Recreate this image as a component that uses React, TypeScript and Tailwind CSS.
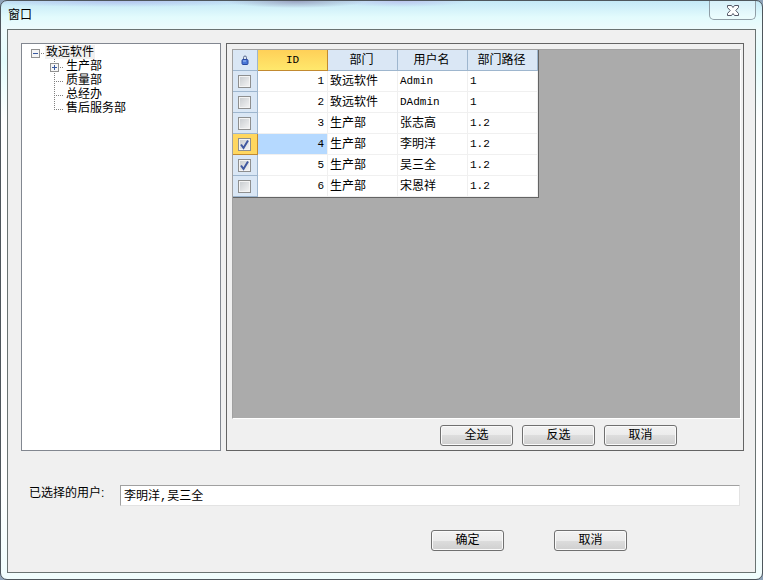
import React from "react";

interface User {
  id: number;
  dept: string;
  name: string;
  path: string;
  checked?: boolean;
  current?: boolean;
}

const users: User[] = [
  { id: 1, dept: "致远软件", name: "Admin", path: "1" },
  { id: 2, dept: "致远软件", name: "DAdmin", path: "1" },
  { id: 3, dept: "生产部", name: "张志高", path: "1.2" },
  { id: 4, dept: "生产部", name: "李明洋", path: "1.2", checked: true, current: true },
  { id: 5, dept: "生产部", name: "吴三全", path: "1.2", checked: true },
  { id: 6, dept: "生产部", name: "宋恩祥", path: "1.2" },
];

const departments = [
  { name: "生产部", expandable: true },
  { name: "质量部" },
  { name: "总经办" },
  { name: "售后服务部" },
];

const isLatin = (text: string) => /^[\w.]+$/.test(text);

const Button: React.FC<{ children: React.ReactNode }> = ({ children }) => (
  <button
    type="button"
    className="flex h-[21px] w-[73px] items-center justify-center rounded-[3px] border border-[#707070] bg-[linear-gradient(#f2f2f2,#ebebeb_50%,#dddddd_50%,#cfcfcf)] pb-0.5 leading-4 shadow-[inset_0_0_0_1px_#fafafa]"
  >
    {children}
  </button>
);

const ExpanderBox: React.FC<{ open: boolean }> = ({ open }) => (
  <>
    <rect x="0.5" y="4.5" width="8" height="8" rx="1" fill="#f6f6f6" stroke="#919191" />
    <path d={open ? "M2 8.5h5" : "M2 8.5h5M4.5 6v5"} stroke="#3a5aa0" />
  </>
);

const Tree: React.FC = () => (
  <ul className="w-[200px] shrink-0 border border-[#828790] bg-white pt-px leading-[14px]">
    <li>
      <div className="flex pl-[9px]">
        <svg width="14" height="14" fill="none" shapeRendering="crispEdges">
          <ExpanderBox open />
          <path d="M10 8.5h4" stroke="#808080" strokeDasharray="1 1" />
        </svg>
        <span className="bg-[#f0f0f0] px-px">致远软件</span>
      </div>
      <ul className="pl-7">
        {departments.map((dept, i) => (
          <li key={dept.name} className="flex">
            <svg width="16" height="14" fill="none" shapeRendering="crispEdges">
              <path
                d={i === departments.length - 1 ? "M4.5 0v9" : "M4.5 0v14"}
                stroke="#808080"
                strokeDasharray="1 1"
              />
              <path d="M4 8.5h9" stroke="#808080" strokeDasharray="1 1" />
              {dept.expandable && <ExpanderBox open={false} />}
            </svg>
            {dept.name}
          </li>
        ))}
      </ul>
    </li>
  </ul>
);

const RowCheckbox: React.FC<{ user: User }> = ({ user }) => (
  <div className="relative ml-[5px] size-[13px]">
    <input
      type="checkbox"
      aria-label={user.name}
      defaultChecked={user.checked}
      className="peer block size-[13px] appearance-none border border-[#8e8f8f] bg-[linear-gradient(135deg,#c6cace,#f6f6f6)] shadow-[inset_0_0_0_1px_#f4f4f4]"
    />
    <svg
      className="pointer-events-none absolute inset-0 hidden peer-checked:block"
      width="13"
      height="13"
      fill="none"
    >
      <path d="M3 6.500L5.500 10L10 2.500" stroke="#4058a0" strokeWidth="2" />
    </svg>
  </div>
);

const UserTable: React.FC = () => (
  <table className="w-[306px] table-fixed border-separate border-spacing-0 border-r border-b border-[#646464] bg-white leading-4">
    <colgroup>
      <col className="w-[25px]" />
      <col className="w-[70px]" />
      <col className="w-[70px]" />
      <col className="w-[70px]" />
      <col className="w-[70px]" />
    </colgroup>
    <thead>
      <tr className="h-[21px]">
        <th className="border-r border-b border-[#9eb6ce] bg-[#dae7f5] p-0">
          <svg className="mx-auto" width="8" height="10" viewBox="0 0 8 10" fill="none">
            <path d="M2.500 5V2.500a1.500 1.500 0 0 1 3 0V5" stroke="#5b6a90" />
            <rect x="1" y="4.500" width="6" height="5" rx="1" fill="#4a78d8" stroke="#2848a0" />
            <path d="M2 6h3" stroke="#a8c4f8" />
          </svg>
        </th>
        <th className="border-r border-b border-[#c28a30] bg-[linear-gradient(#ffd058,#ffe86c)] p-0 font-['Liberation_Mono',monospace] text-[11px] font-normal">
          ID
        </th>
        {["部门", "用户名", "部门路径"].map((title) => (
          <th key={title} className="border-r border-b border-[#9eb6ce] bg-[#dae7f5] p-0 pr-0.5 font-normal">
            {title}
          </th>
        ))}
      </tr>
    </thead>
    <tbody>
      {users.map((user) => (
        <tr key={user.id} className="h-[21px]">
          <td
            className={
              user.current
                ? "border-r border-b border-[#c28a30] bg-[#ffd75f] p-0"
                : "border-r border-b border-[#9eb6ce] bg-[#dae7f5] p-0"
            }
          >
            <RowCheckbox user={user} />
          </td>
          <td
            className={
              user.current
                ? "border-r border-b border-[#f0f0f0] bg-[#b5d9ff] p-0 pr-[3px] text-right font-['Liberation_Mono',monospace] text-[11px]"
                : "border-r border-b border-[#f0f0f0] p-0 pr-[3px] text-right font-['Liberation_Mono',monospace] text-[11px]"
            }
          >
            {user.id}
          </td>
          {[user.dept, user.name, user.path].map((text, i) => (
            <td
              key={i}
              className={
                isLatin(text)
                  ? "border-r border-b border-[#f0f0f0] p-0 pl-0.5 font-['Liberation_Mono',monospace] text-[11px]"
                  : "border-r border-b border-[#f0f0f0] p-0 pl-0.5"
              }
            >
              {text}
            </td>
          ))}
        </tr>
      ))}
    </tbody>
  </table>
);

const App: React.FC = () => (
  <div className="bg-[#8fa3b8]">
    <div className="flex min-h-screen flex-col rounded-[7px] border border-[#4e565c] bg-[radial-gradient(70px_7px_at_295px_0,#9aa2c0,transparent),radial-gradient(160px_6px_at_120px_0,#b4c4ee,transparent),radial-gradient(70px_6px_at_400px_0,#bcc6ee,transparent),linear-gradient(#c4e8f6,#e2fbfd_16px,#effbfc_30px,#e4fdfd_60px,#ffffff_120px,#ffffff_480px,#f0fdfd)] px-1.5 pb-1.5 font-['Liberation_Sans','Noto_Sans_CJK_SC',sans-serif] text-xs text-black">
      <header className="flex h-7 justify-between">
        <h1 className="pt-1.5 pl-px leading-4">窗口</h1>
        <button
          type="button"
          aria-label="关闭"
          className="flex h-[19px] w-[47px] items-center justify-center rounded-b-[5px] border border-t-0 border-[#8f9da6] bg-white/30"
        >
          <svg width="12" height="11" viewBox="0 0 12 11">
            <path
              d="M.5 .5h4L6 2.500 7.500 .5h4v2L8.800 5.500l2.700 3v2h-4L6 8.500 4.500 10.500h-4v-2L3.200 5.500 .5 2.500z"
              fill="#fff"
              stroke="#535666"
            />
          </svg>
        </button>
      </header>

      <main className="flex flex-1 flex-col border border-[#6a7372] bg-[#f0f0f0] pt-[13px] pr-[11px] pb-[21px] pl-[13px]">
        <div className="flex flex-1 gap-[5px]">
          <Tree />
          <section className="flex min-w-0 flex-1 flex-col border border-[#646464] pt-[5px] pr-0.5 pb-1 pl-[5px]">
            <div className="flex-1 border border-t-[#a0a0a0] border-r-white border-b-white border-l-[#a0a0a0] bg-[#ababab]">
              <UserTable />
            </div>
            <div className="mt-1.5 mr-16 flex justify-end gap-[9px]">
              <Button>全选</Button>
              <Button>反选</Button>
              <Button>取消</Button>
            </div>
          </section>
        </div>

        <div className="mt-[34px] mr-1 flex pl-2">
          <label htmlFor="selected-users" className="w-[91px] shrink-0 leading-4">
            已选择的用户:
          </label>
          <input
            id="selected-users"
            defaultValue="李明洋,吴三全"
            className="h-[21px] min-w-0 flex-1 border border-t-[#a0a0a0] border-r-[#e3e3e3] border-b-[#e3e3e3] border-l-[#a0a0a0] bg-white px-[3px] pb-0.5 font-['Liberation_Mono','Noto_Sans_CJK_SC',monospace]"
          />
        </div>

        <div className="mt-6 mr-[117px] flex justify-end gap-[50px]">
          <Button>确定</Button>
          <Button>取消</Button>
        </div>
      </main>
    </div>
  </div>
);

export default App;
